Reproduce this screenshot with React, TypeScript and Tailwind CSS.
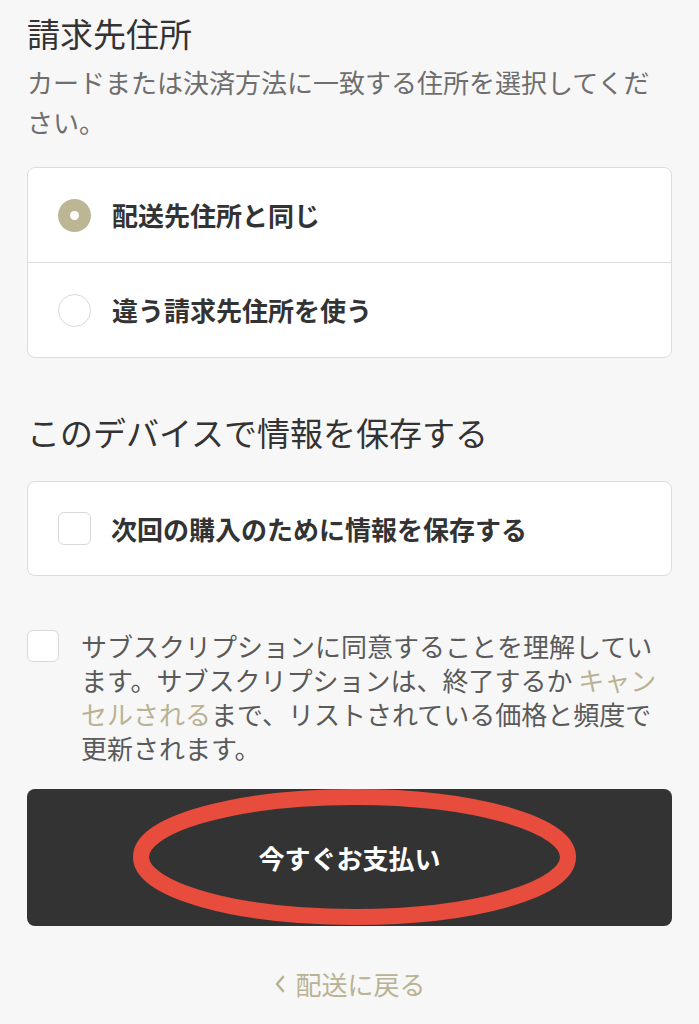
import React from "react";

export default function App() {
  const font = { fontFamily: '"Noto Sans CJK JP", "Noto Sans", sans-serif' };
  return (
    <div className="min-h-[1024px] w-full bg-[#f7f7f7] px-[27px]" style={font}>
      <h1 className="pt-[11px] text-[33px] leading-[44px] font-normal text-[#333333]">請求先住所</h1>
      <p className="mt-[7px] text-[26px] leading-[40px] text-[#6e6e6e]">
        カードまたは決済方法に一致する住所を選択してください。
      </p>

      <div className="mt-[25px] overflow-hidden rounded-[8px] border border-[#dcdcdc] bg-white">
        <div className="flex h-[94px] items-center gap-[21px] pl-[30px]">
          <span className="flex h-[33px] w-[33px] items-center justify-center rounded-full bg-[#bcb695]">
            <span className="h-[9px] w-[9px] rounded-full bg-white" />
          </span>
          <span className="text-[26px] font-bold leading-[34px] text-[#333333]">配送先住所と同じ</span>
        </div>
        <div className="h-px bg-[#dcdcdc]" />
        <div className="flex h-[94px] items-center gap-[21px] pl-[30px]">
          <span className="h-[33px] w-[33px] rounded-full border-[1.5px] border-[#d8d8d8] bg-white" />
          <span className="text-[26px] font-bold leading-[34px] text-[#333333]">違う請求先住所を使う</span>
        </div>
      </div>

      <h2 className="mt-[52px] text-[33px] leading-[44px] font-normal text-[#333333]">このデバイスで情報を保存する</h2>

      <div className="mt-[27px] flex h-[95px] items-center gap-[20px] rounded-[8px] border border-[#dcdcdc] bg-white pl-[30px]">
        <span className="h-[33px] w-[33px] rounded-[6px] border-[1.5px] border-[#d8d8d8] bg-white" />
        <span className="text-[26px] font-bold leading-[34px] text-[#333333]">次回の購入のために情報を保存する</span>
      </div>

      <div className="mt-[53px] flex items-start gap-[22px]">
        <span className="mt-[1px] h-[32px] w-[32px] shrink-0 rounded-[6px] border-[1.5px] border-[#d8d8d8] bg-white" />
        <p className="flex-1 text-[26px] leading-[34px] text-[#5a5a5a]">
          サブスクリプションに同意することを理解しています。サブスクリプションは、終了するか{" "}
          <span className="text-[#b9b393]">キャンセルされる</span>まで、リストされている価格と頻度で更新されます。
        </p>
      </div>

      <div className="relative mt-[24px]">
        <button className="flex h-[137px] w-full items-center justify-center rounded-[8px] bg-[#333333] text-[26px] font-bold leading-[34px] text-white">
          今すぐお支払い
        </button>
        <svg
          className="pointer-events-none absolute left-[106px] top-0"
          width="443"
          height="136"
          viewBox="0 0 443 136"
        >
          <ellipse cx="221.5" cy="68" rx="213.5" ry="60" fill="none" stroke="#e74c3c" strokeWidth="16" />
        </svg>
      </div>

      <div className="mt-[41px] flex items-center justify-center gap-[6px] text-[26px] leading-[34px] text-[#b9b393]">
        <svg width="14" height="20" viewBox="0 0 14 20" className="mr-[2px]">
          <path d="M10 3 L4 10 L10 17" fill="none" stroke="#b9b393" strokeWidth="2.6" strokeLinecap="round" strokeLinejoin="round" />
        </svg>
        <span>配送に戻る</span>
      </div>
    </div>
  );
}
